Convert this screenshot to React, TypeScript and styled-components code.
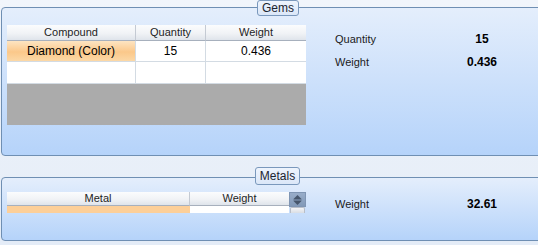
import { Fragment } from 'react'
import styled, { createGlobalStyle } from 'styled-components'

const GlobalStyle = createGlobalStyle`
  html, body {
    margin: 0;
    padding: 0;
    background: #eaf0f9;
  }
  body {
    font-family: 'Liberation Sans', Arial, sans-serif;
    color: #000;
  }
`

const gems = [{ compound: 'Diamond (Color)', quantity: '15', weight: '0.436' }]

function App() {
  return (
    <Page>
      <GlobalStyle />
      <GroupBox $height={149}>
        <GroupTab $left={255} $top={-8} $width={42} $height={16}>Gems</GroupTab>
        <GroupBody $top={17}>
          <Table $cols="129px 70px 100px">
            <HeadCell>Compound</HeadCell>
            <HeadCell>Quantity</HeadCell>
            <HeadCell $last>Weight</HeadCell>
            {gems.map(gem => (
              <Fragment key={gem.compound}>
                <Cell $selected $height={21}>{gem.compound}</Cell>
                <Cell $height={21}>{gem.quantity}</Cell>
                <Cell $height={21} $last>{gem.weight}</Cell>
              </Fragment>
            ))}
            <Cell $height={22} />
            <Cell $height={22} />
            <Cell $height={22} $last />
            <EmptyArea />
          </Table>
          <Summary $top={2}>
            <Label>Quantity</Label>
            <Value>15</Value>
            <Label>Weight</Label>
            <Value>0.436</Value>
          </Summary>
        </GroupBody>
      </GroupBox>

      <GroupBox $height={64} $gap={21}>
        <GroupTab $left={253} $top={-11} $width={45} $height={18}>Metals</GroupTab>
        <GroupBody $top={14}>
          <MetalGrid>
            <Table $cols="183px 99px">
              <HeadCell $flat>Metal</HeadCell>
              <HeadCell $flat $last>Weight</HeadCell>
              <PartialCell $selected />
              <PartialCell />
            </Table>
            <ScrollBar>
              <ScrollButton>
                <svg width="11" height="12" viewBox="0 0 11 12">
                  <path d="M5.5 1 L9.5 5 H1.5 Z" fill="#46566c" />
                  <rect x="1.5" y="5.5" width="8" height="1" fill="#46566c" />
                  <path d="M5.5 11 L9.5 7 H1.5 Z" fill="#46566c" />
                </svg>
              </ScrollButton>
              <ScrollThumb />
            </ScrollBar>
          </MetalGrid>
          <Summary $top={0}>
            <Label>Weight</Label>
            <Value>32.61</Value>
          </Summary>
        </GroupBody>
      </GroupBox>
    </Page>
  )
}

export default App

const Page = styled.div`
  width: 538px;
  height: 245px;
  overflow: hidden;
  padding-top: 7px;
  box-sizing: border-box;
  background: linear-gradient(#f1f5fb, #e4ecf7);
`

const GroupBox = styled.section<{ $height: number; $gap?: number }>`
  position: relative;
  box-sizing: border-box;
  height: ${p => p.$height}px;
  width: 560px;
  margin-left: 1px;
  margin-top: ${p => p.$gap ?? 0}px;
  border: 1px solid #6f8fb3;
  border-radius: 4px 0 0 4px;
  background: linear-gradient(#e4eefc, #b5d3fa);
`

const GroupTab = styled.div<{ $left: number; $top: number; $width: number; $height: number }>`
  position: absolute;
  left: ${p => p.$left}px;
  top: ${p => p.$top}px;
  width: ${p => p.$width}px;
  height: ${p => p.$height}px;
  box-sizing: border-box;
  border: 1px solid #7a98bc;
  border-radius: 3px;
  background: linear-gradient(#eef4fd, #dbe7f8);
  font-size: 12px;
  line-height: ${p => p.$height - 2}px;
  text-align: center;
  color: #1b2430;
`

const GroupBody = styled.div<{ $top: number }>`
  display: flex;
  align-items: flex-start;
  padding: ${p => p.$top}px 0 0 5px;
`

const Table = styled.div<{ $cols: string }>`
  display: grid;
  grid-template-columns: ${p => p.$cols};
  background: #fff;
`

const HeadCell = styled.div<{ $last?: boolean; $flat?: boolean }>`
  height: ${p => (p.$flat ? 14 : 16)}px;
  box-sizing: border-box;
  border-right: ${p => (p.$last ? 'none' : '1px solid #c4cad3')};
  border-bottom: 1px solid #a7b0bd;
  background: linear-gradient(#fbfcfd, #f1f3f6 55%, #dfe4eb);
  font-size: 11px;
  line-height: ${p => (p.$flat ? 13 : 15)}px;
  text-align: center;
  color: #1e1e1e;
`

const Cell = styled.div<{ $height: number; $selected?: boolean; $last?: boolean }>`
  height: ${p => p.$height}px;
  box-sizing: border-box;
  border-right: ${p => (p.$last ? 'none' : '1px solid #d3dbe3')};
  border-bottom: 1px solid #d3dbe3;
  background: ${p =>
    p.$selected
      ? 'linear-gradient(#fde4c2, #fbc88a 55%, #fcd8a6)'
      : '#fff'};
  font-size: 12px;
  line-height: ${p => p.$height - 1}px;
  text-align: center;
`

const EmptyArea = styled.div`
  grid-column: 1 / -1;
  height: 41px;
  background: #ababab;
`

const MetalGrid = styled.div`
  display: flex;
  width: 299px;
`

const PartialCell = styled.div<{ $selected?: boolean }>`
  height: 7px;
  background: ${p => (p.$selected ? '#fdcf98' : '#fff')};
`

const ScrollBar = styled.div`
  width: 17px;
  display: flex;
  flex-direction: column;
`

const ScrollButton = styled.div`
  height: 15px;
  display: flex;
  align-items: center;
  justify-content: center;
  background: linear-gradient(#98adc9, #8299b8);
  border: 1px solid #7f95b3;
  box-sizing: border-box;
`

const ScrollThumb = styled.div`
  height: 6px;
  margin: 0 1px;
  box-sizing: border-box;
  border: 1px solid #b8bec8;
  border-bottom: none;
  border-radius: 2px 2px 0 0;
  background: linear-gradient(#f4f5f7, #d9dde3);
`

const Summary = styled.div<{ $top: number }>`
  display: grid;
  grid-template-columns: 117px 60px;
  grid-auto-rows: 23px;
  align-items: center;
  margin: ${p => p.$top}px 0 0 29px;
`

const Label = styled.div`
  font-size: 11px;
  color: #1b1b1b;
`

const Value = styled.div`
  font-size: 12px;
  font-weight: bold;
  text-align: center;
`
